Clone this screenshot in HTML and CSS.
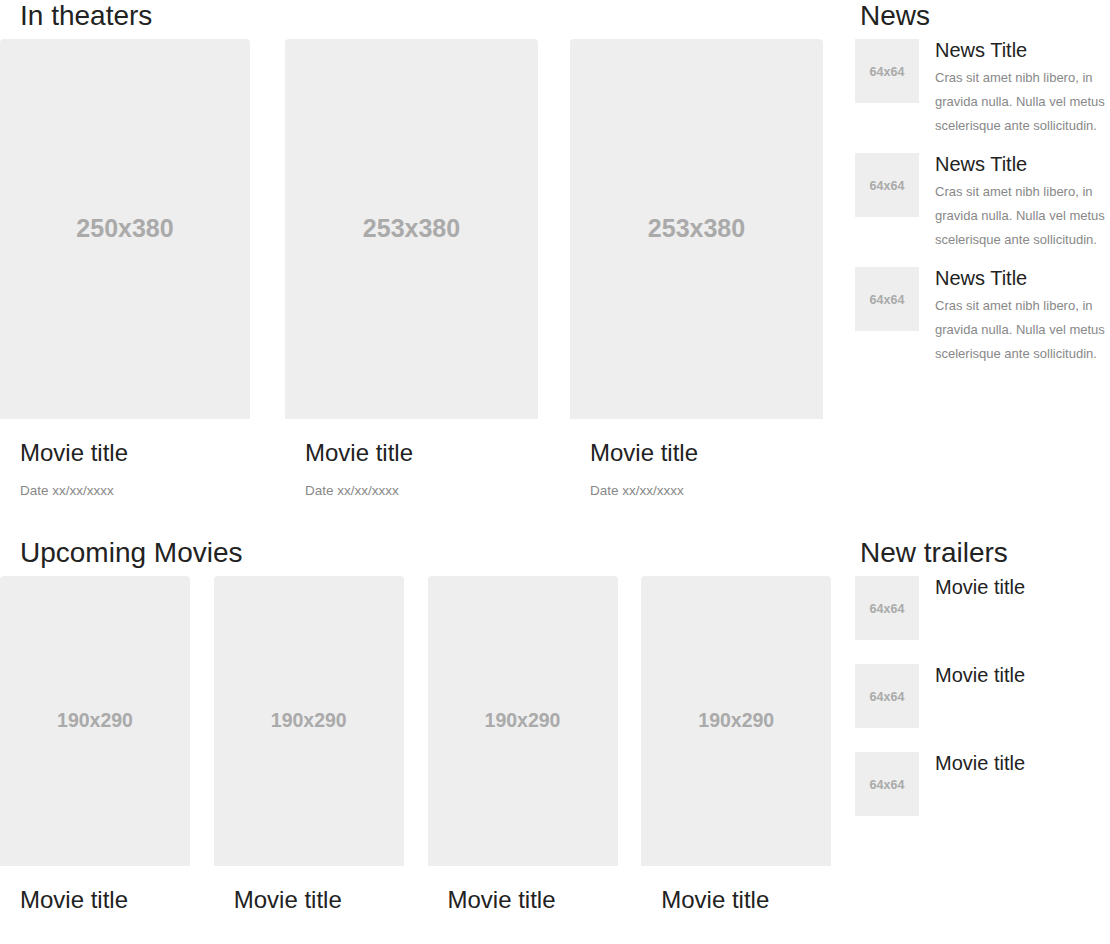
FILE: index.html
```html
<!DOCTYPE html>
<html>
<head>
<meta charset="utf-8">
<link rel="stylesheet" href="styles.css">
</head>
<body>
<div class="page">
  <section class="main theaters">
    <h2 class="heading">In theaters</h2>
    <div class="grid3">
      <div class="movie">
        <div class="poster big w250">250x380</div>
        <h3 class="movie-title">Movie title</h3>
        <p class="date">Date xx/xx/xxxx</p>
      </div>
      <div class="movie">
        <div class="poster big w253">253x380</div>
        <h3 class="movie-title">Movie title</h3>
        <p class="date">Date xx/xx/xxxx</p>
      </div>
      <div class="movie">
        <div class="poster big w253">253x380</div>
        <h3 class="movie-title">Movie title</h3>
        <p class="date">Date xx/xx/xxxx</p>
      </div>
    </div>
  </section>
  <aside class="side news">
    <h2 class="heading side-heading">News</h2>
    <div class="media">
      <div class="thumb">64x64</div>
      <div class="media-body">
        <h4 class="media-title">News Title</h4>
        <p class="media-text">Cras sit amet nibh libero, in gravida nulla. Nulla vel metus scelerisque ante sollicitudin.</p>
      </div>
    </div>
    <div class="media">
      <div class="thumb">64x64</div>
      <div class="media-body">
        <h4 class="media-title">News Title</h4>
        <p class="media-text">Cras sit amet nibh libero, in gravida nulla. Nulla vel metus scelerisque ante sollicitudin.</p>
      </div>
    </div>
    <div class="media">
      <div class="thumb">64x64</div>
      <div class="media-body">
        <h4 class="media-title">News Title</h4>
        <p class="media-text">Cras sit amet nibh libero, in gravida nulla. Nulla vel metus scelerisque ante sollicitudin.</p>
      </div>
    </div>
  </aside>
  <section class="main upcoming">
    <h2 class="heading">Upcoming Movies</h2>
    <div class="grid4">
      <div class="movie">
        <div class="poster small">190x290</div>
        <h3 class="movie-title">Movie title</h3>
      </div>
      <div class="movie">
        <div class="poster small">190x290</div>
        <h3 class="movie-title">Movie title</h3>
      </div>
      <div class="movie">
        <div class="poster small">190x290</div>
        <h3 class="movie-title">Movie title</h3>
      </div>
      <div class="movie">
        <div class="poster small">190x290</div>
        <h3 class="movie-title">Movie title</h3>
      </div>
    </div>
  </section>
  <aside class="side trailers">
    <h2 class="heading side-heading">New trailers</h2>
    <div class="media trailer">
      <div class="thumb">64x64</div>
      <div class="media-body">
        <h4 class="media-title">Movie title</h4>
      </div>
    </div>
    <div class="media trailer">
      <div class="thumb">64x64</div>
      <div class="media-body">
        <h4 class="media-title">Movie title</h4>
      </div>
    </div>
    <div class="media trailer">
      <div class="thumb">64x64</div>
      <div class="media-body">
        <h4 class="media-title">Movie title</h4>
      </div>
    </div>
  </aside>
</div>
</body>
</html>
```

FILE: styles.css
```css
html, body {
  margin: 0;
  padding: 0;
  background: #fff;
}
body {
  font-family: "Liberation Sans", Arial, Helvetica, sans-serif;
  color: #222;
}
.page {
  display: grid;
  grid-template-columns: 855px 1fr;
  width: 1110px;
}
.heading {
  font-size: 28px;
  line-height: 31px;
  font-weight: normal;
  margin: 0 0 8px;
  padding-left: 20px;
  color: #222;
}
.side-heading {
  padding-left: 5px;
}
.theaters, .news {
  padding-bottom: 37px;
}
.grid3 {
  display: grid;
  grid-template-columns: repeat(3, 1fr);
}
.grid4 {
  display: grid;
  grid-template-columns: repeat(4, 1fr);
}
.poster {
  background: #eeeeee;
  color: #aaaaaa;
  font-weight: bold;
  display: flex;
  align-items: center;
  justify-content: center;
  border-radius: 4px 4px 0 0;
  padding-bottom: 2px;
  box-sizing: border-box;
}
.big {
  height: 380px;
  font-size: 25px;
}
.w250 { width: 250px; }
.w253 { width: 253px; }
.small {
  width: 190px;
  height: 290px;
  font-size: 19.5px;
}
.movie-title {
  font-size: 24px;
  line-height: 26.4px;
  font-weight: normal;
  margin: 21px 0 0;
  padding-left: 20px;
  color: #222;
}
.date {
  font-size: 13.5px;
  line-height: 19px;
  margin: 15px 0 0;
  padding-left: 20px;
  color: #888;
}
.media {
  display: flex;
  align-items: flex-start;
  gap: 16px;
  margin-bottom: 15px;
}
.media.trailer {
  margin-bottom: 24px;
}
.thumb {
  width: 64px;
  height: 64px;
  flex: none;
  background: #eeeeee;
  color: #aaaaaa;
  font-weight: bold;
  font-size: 12.5px;
  display: flex;
  align-items: center;
  justify-content: center;
  padding-top: 1px;
  box-sizing: border-box;
}
.media-body {
  flex: 1;
}
.media-title {
  font-size: 20px;
  line-height: 22px;
  font-weight: normal;
  margin: 0 0 5px;
  color: #222;
}
.media-text {
  font-size: 13px;
  line-height: 24px;
  margin: 0;
  color: #888;
}
```
